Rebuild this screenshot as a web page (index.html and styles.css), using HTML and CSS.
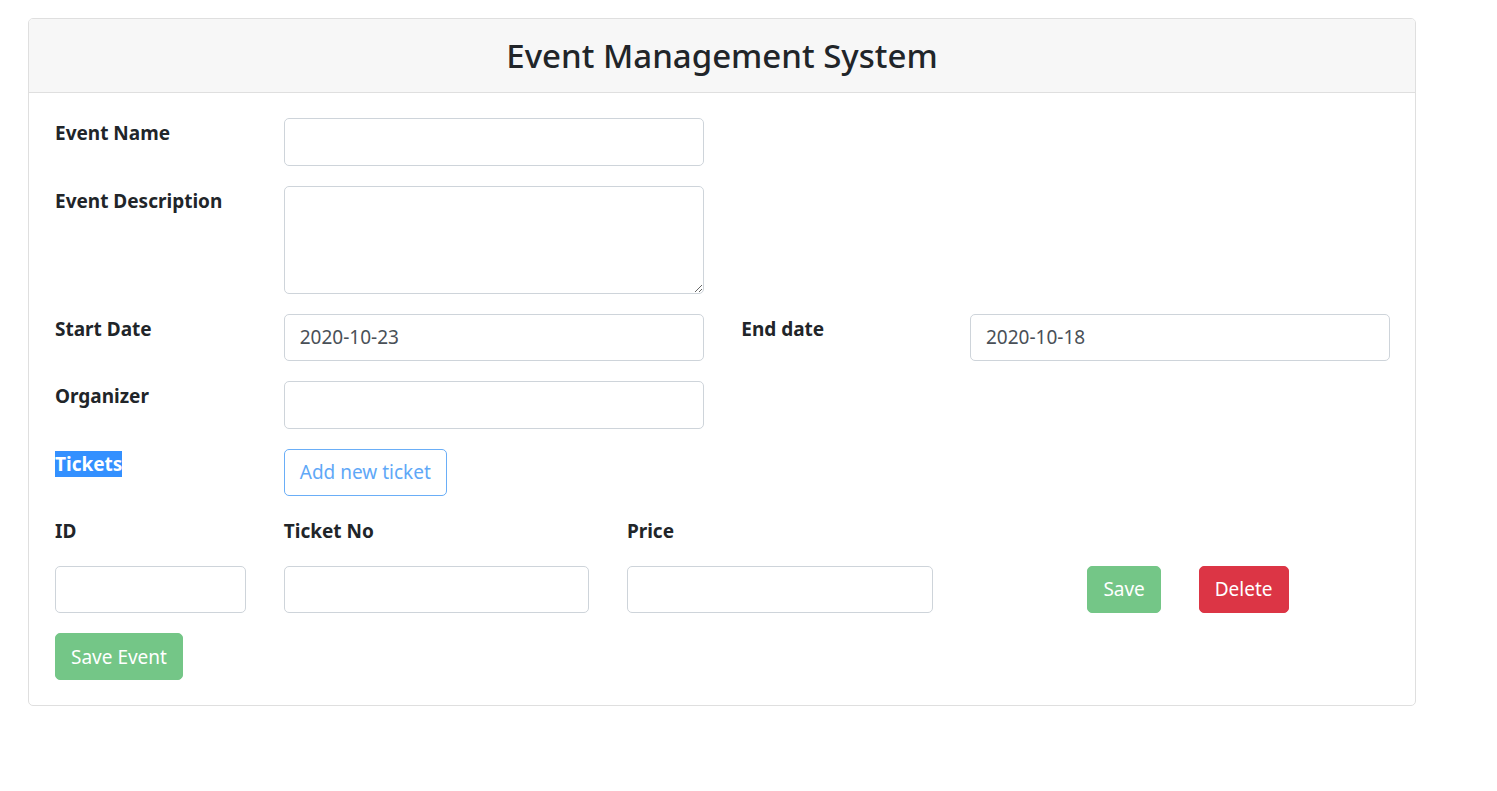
FILE: index.html
```html
<!DOCTYPE html>
<html lang="en">
<head>
<meta charset="utf-8">
<title>Event Management System</title>
<link rel="stylesheet" href="styles.css">
</head>
<body>
<div class="card">
  <div class="card-header">
    <h3 class="title">Event Management System</h3>
  </div>
  <div class="card-body">
    <div class="row">
      <label class="lbl span2">Event Name</label>
      <input class="control span4" type="text">
    </div>
    <div class="row">
      <label class="lbl span2">Event Description</label>
      <textarea class="control area span4" rows="3"></textarea>
    </div>
    <div class="row">
      <label class="lbl span2">Start Date</label>
      <input class="control span4" type="text" value="2020-10-23">
      <label class="lbl span2">End date</label>
      <input class="control span4" type="text" value="2020-10-18">
    </div>
    <div class="row">
      <label class="lbl span2">Organizer</label>
      <input class="control span4" type="text">
    </div>
    <div class="row">
      <label class="lbl span2"><span class="selected">Tickets</span></label>
      <div class="span4"><button class="btn btn-outline" type="button">Add new ticket</button></div>
    </div>
    <div class="row">
      <label class="lbl span2">ID</label>
      <label class="lbl span3">Ticket No</label>
      <label class="lbl span3">Price</label>
    </div>
    <div class="row">
      <input class="control span2" type="text">
      <input class="control span3" type="text">
      <input class="control span3" type="text">
      <div class="span1 col10"><button class="btn btn-success save-ticket" type="button">Save</button></div>
      <div class="span1"><button class="btn btn-danger" type="button">Delete</button></div>
    </div>
    <div class="row last">
      <div class="span2"><button class="btn btn-success" type="button">Save Event</button></div>
    </div>
  </div>
</div>
</body>
</html>
```
FILE: styles.css
```css
* { box-sizing: border-box; }
html, body { margin: 0; }
body {
  padding: 18px 0 0 28px;
  font-family: "Noto Sans", "Open Sans", "Liberation Sans", sans-serif;
  font-size: 20px;
  line-height: 1.5;
  color: #212529;
  background: #fff;
}
.card {
  width: 1388px;
  border: 1px solid #dfdfdf;
  border-radius: 5px;
  overflow: hidden;
}
.card-header {
  background: #f7f7f7;
  border-bottom: 1px solid #dfdfdf;
  padding: 15px 25px;
  text-align: center;
}
.title {
  margin: 0;
  font-size: 33px;
  font-weight: 500;
  line-height: 43px;
}
.card-body { padding: 25px 25px 25px 26px; }
.row {
  display: grid;
  grid-template-columns: repeat(12, minmax(0, 1fr));
  column-gap: 37.5px;
  margin-bottom: 20px;
  align-items: start;
}
.row.last { margin-bottom: 0; }
.span1 { grid-column: span 1; }
.span2 { grid-column: span 2; }
.span3 { grid-column: span 3; }
.span4 { grid-column: span 4; }
.col10 { grid-column: 10 / span 1; }
.lbl {
  font-weight: 700;
  font-size: 19px;
  line-height: 30px;
  white-space: nowrap;
}
.selected {
  background: #3390ff;
  color: #fff;
}
.control {
  display: block;
  width: 100%;
  min-width: 0;
  height: 47.5px;
  padding: 7px 15px;
  font: inherit;
  font-size: 19px;
  color: #495057;
  background: #fff;
  border: 1px solid #ced4da;
  border-radius: 5px;
}
.area { height: 108px; resize: vertical; }
.btn {
  display: inline-block;
  font: inherit;
  font-size: 19px;
  line-height: 30px;
  padding: 7.5px 15px;
  border: 1px solid transparent;
  border-radius: 5px;
  white-space: nowrap;
  cursor: pointer;
}
.save-ticket { margin-left: 3px; }
.btn-outline {
  background: #fff;
  color: #5fa8f7;
  border-color: #6aaef7;
}
.btn-success {
  background: #74c687;
  border-color: #74c687;
  color: #fff;
}
.btn-danger {
  background: #dc3545;
  border-color: #dc3545;
  color: #fff;
}
```
